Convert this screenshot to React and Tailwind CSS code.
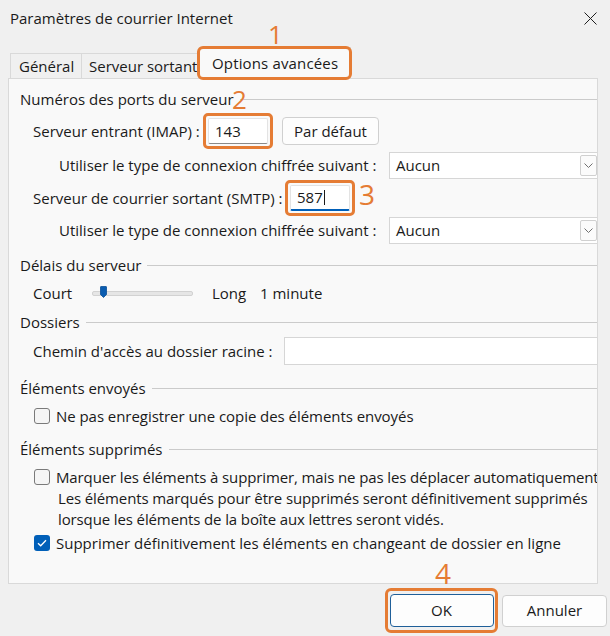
import React from "react";

function GroupHeader({ children, className = "" }) {
  return (
    <div className={"flex items-center h-[20px] " + className}>
      <span className="whitespace-nowrap">{children}</span>
      <div className="flex-1 h-px bg-[#cbcbcb] ml-[6px]" />
    </div>
  );
}

function Checkbox({ checked }) {
  if (checked) {
    return (
      <span className="w-4 h-4 rounded-[3px] bg-[#005fb8] flex items-center justify-center shrink-0">
        <svg width="10" height="8" viewBox="0 0 10 8">
          <path d="M1 4.2 L3.7 6.8 L9 1.2" stroke="white" strokeWidth="1.3" fill="none" />
        </svg>
      </span>
    );
  }
  return <span className="w-4 h-4 rounded-[3px] border border-[#7a7a7a] bg-[#f5f5f5] shrink-0" />;
}

function Dropdown() {
  return (
    <div className="flex items-center w-[209px] h-[27px] bg-white border border-[#d6d6d6] pl-[6px] shrink-0">
      <span className="flex-1">Aucun</span>
      <span className="w-[17px] h-[21px] border border-[#d0d0d0] rounded-[2px] bg-[#fbfbfb] flex items-center justify-center">
        <svg width="9" height="5" viewBox="0 0 9 5">
          <path d="M0.5 0.5 L4.5 4.5 L8.5 0.5" stroke="#707070" fill="none" />
        </svg>
      </span>
    </div>
  );
}

export default function App() {
  return (
    <div className="w-[610px] h-[636px] bg-[#f0f0f0] relative overflow-hidden font-['Open_Sans',sans-serif] text-[15px] text-[#1a1a1a]">
      {/* Title bar */}
      <div className="flex items-center justify-between h-[36px] pl-[10px] pr-[13px]">
        <span className="text-[15px]">Paramètres de courrier Internet</span>
        <svg width="13" height="13" viewBox="0 0 13 13">
          <path d="M0.5 0.5 L12.5 12.5 M12.5 0.5 L0.5 12.5" stroke="#1f1f1f" strokeWidth="1" fill="none" />
        </svg>
      </div>

      {/* Tabs */}
      <div className="flex items-end h-[42px] pl-[10px]">
        <div className="w-[71px] h-[25px] flex items-center pl-[8px] border-t border-l border-[#d9d9d9] bg-[#f0f0f0]">
          Général
        </div>
        <div className="w-[118px] h-[25px] flex items-center pl-[7px] border-t border-l border-r border-[#d9d9d9] bg-[#f0f0f0] whitespace-nowrap">
          Serveur sortant
        </div>
        <div className="relative z-10 w-[152px] h-[32px] mb-[-1px] flex items-center pl-[12px] border-t border-l border-r border-[#d9d9d9] bg-[#f9f9f9] whitespace-nowrap tracking-[0.15px]">
          Options avancées
        </div>
      </div>

      {/* Panel */}
      <div className="ml-[8px] w-[590px] h-[506px] border border-[#d9d9d9] bg-[#f9f9f9] overflow-hidden pl-[11px] pt-[10px] whitespace-nowrap">
        <GroupHeader>Numéros des ports du serveur</GroupHeader>

        <div className="flex items-center h-[38px] mt-[3px] pl-[13px]">
          <span className="w-[170px] shrink-0">Serveur entrant (IMAP) :</span>
          <div className="w-[70px] h-[36px] border-[3px] border-[#e57c34] rounded-[5px] p-[2px] shrink-0">
            <div className="w-full h-full bg-white border border-[#e3e3e3] border-b-[#8a8a8a] rounded-[2px] flex items-center pl-[6px]">
              143
            </div>
          </div>
          <div className="ml-[9px] w-[97px] h-[28px] border border-[#d0d0d0] rounded-[4px] bg-[#fdfdfd] flex items-center justify-center shrink-0">
            Par défaut
          </div>
        </div>

        <div className="flex items-center h-[30px] pl-[39px]">
          <span className="w-[330px] shrink-0">Utiliser le type de connexion chiffrée suivant :</span>
          <Dropdown />
        </div>

        <div className="flex items-center h-[36px] pl-[13px]">
          <span className="w-[252px] shrink-0">Serveur de courrier sortant (SMTP) :</span>
          <div className="w-[70px] h-[36px] border-[3px] border-[#e57c34] rounded-[5px] p-[2px] shrink-0">
            <div className="w-full h-full bg-white border border-[#e3e3e3] border-b-2 border-b-[#005fb8] rounded-[2px] flex items-center pl-[6px]">
              587
              <span className="w-px h-[15px] bg-[#1a1a1a] ml-[1px]" />
            </div>
          </div>
        </div>

        <div className="flex items-center h-[28px] pl-[39px]">
          <span className="w-[330px] shrink-0">Utiliser le type de connexion chiffrée suivant :</span>
          <Dropdown />
        </div>

        <GroupHeader className="mt-[11px]">Délais du serveur</GroupHeader>

        <div className="flex items-center h-[36px] pl-[13px]">
          <span className="w-[59px] shrink-0">Court</span>
          <div className="relative w-[101px] h-[5px] bg-[#e6e6e6] border border-[#d2d2d2] rounded-[2px] shrink-0">
            <svg className="absolute left-[7px] top-[-6px]" width="7" height="12" viewBox="0 0 7 12">
              <path d="M0.5 1 Q0.5 0.5 1 0.5 L6 0.5 Q6.5 0.5 6.5 1 L6.5 8.5 L3.5 11.5 L0.5 8.5 Z" fill="#0a5cb0" stroke="#0a4f98" strokeWidth="0.8" />
            </svg>
          </div>
          <span className="ml-[19px] w-[48px] shrink-0">Long</span>
          <span>1 minute</span>
        </div>

        <GroupHeader className="mt-[1px]">Dossiers</GroupHeader>

        <div className="flex items-center h-[32px] mt-[3px] pl-[13px]">
          <span className="w-[251px] shrink-0">Chemin d'accès au dossier racine :</span>
          <div className="w-[320px] h-[28px] bg-white border border-[#d6d6d6] shrink-0" />
        </div>

        <GroupHeader className="mt-[11px]">Éléments envoyés</GroupHeader>

        <div className="flex items-center h-[24px] mt-[6px] pl-[14px] gap-[6px]">
          <Checkbox />
          <span className="tracking-[-0.05px]">Ne pas enregistrer une copie des éléments envoyés</span>
        </div>

        <GroupHeader className="mt-[11px]">Éléments supprimés</GroupHeader>

        <div className="flex items-center h-[22px] mt-[7px] pl-[14px] gap-[6px]">
          <Checkbox />
          <span className="tracking-[-0.12px]">Marquer les éléments à supprimer, mais ne pas les déplacer automatiquement</span>
        </div>
        <div className="h-[21px] flex items-center pl-[38px] tracking-[-0.12px]">
          Les éléments marqués pour être supprimés seront définitivement supprimés
        </div>
        <div className="h-[21px] flex items-center pl-[38px] tracking-[-0.12px]">
          lorsque les éléments de la boîte aux lettres seront vidés.
        </div>
        <div className="flex items-center h-[22px] mt-[2px] pl-[14px] gap-[6px]">
          <Checkbox checked />
          <span>Supprimer définitivement les éléments en changeant de dossier en ligne</span>
        </div>
      </div>

      {/* Bottom buttons */}
      <div className="flex items-center mt-[4px] pl-[385px]">
        <div className="w-[113px] h-[45px] border-[3px] border-[#e57c34] rounded-[6px] flex items-center justify-center shrink-0">
          <div className="w-[104px] h-[33px] border border-[#1f5f99] rounded-[4px] bg-[#fdfdfd] flex items-center justify-center">
            OK
          </div>
        </div>
        <div className="ml-[4px] w-[105px] h-[32px] border border-[#d0d0d0] rounded-[4px] bg-[#fdfdfd] flex items-center justify-center shrink-0">
          Annuler
        </div>
      </div>

      {/* Annotations */}
      <div className="absolute left-[197px] top-[46px] w-[155px] h-[34px] border-[3px] border-[#e57c34] rounded-[6px] z-20 pointer-events-none" />
      <span className="absolute left-[268px] top-[21px] text-[26px] leading-none text-[#e57c34]">1</span>
      <span className="absolute left-[232px] top-[86px] text-[26px] leading-none text-[#e57c34]">2</span>
      <span className="absolute left-[359px] top-[180px] text-[28px] leading-none text-[#e57c34]">3</span>
      <span className="absolute left-[435px] top-[559px] text-[28px] leading-none text-[#e57c34]">4</span>
    </div>
  );
}
